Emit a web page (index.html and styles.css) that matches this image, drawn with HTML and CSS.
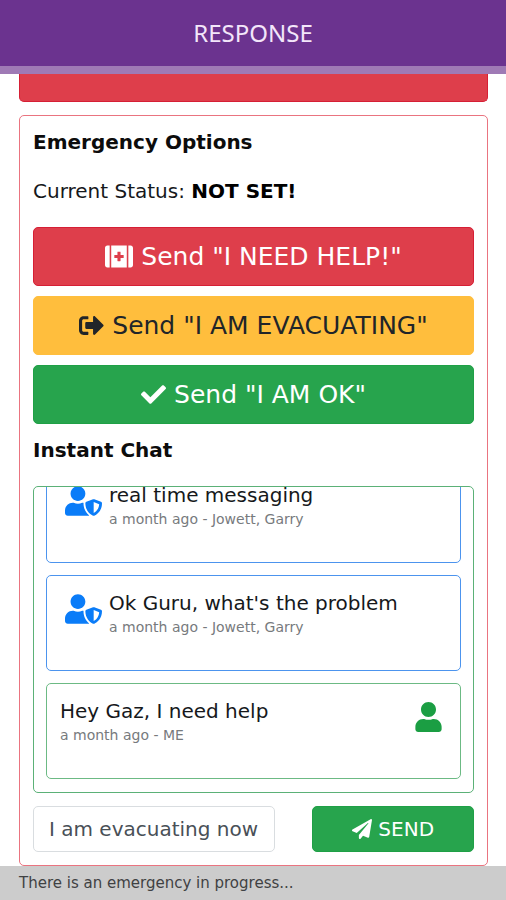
FILE: index.html
```html
<!DOCTYPE html>
<html lang="en">
<head>
<meta charset="utf-8">
<meta name="viewport" content="width=device-width, initial-scale=1">
<title>Response</title>
<link rel="stylesheet" href="styles.css">
</head>
<body>
<svg class="sprite" aria-hidden="true">
  <symbol id="user-shield" viewBox="0 0 640 512"><path d="M622.3 271.1l-115.2-45c-4.1-1.6-12.6-3.7-22.2 0l-115.2 45c-10.7 4.2-17.7 14-17.7 24.9 0 111.6 68.7 188.8 132.9 213.9 9.6 3.7 18 1.6 22.2 0C558.4 489.9 640 420.5 640 296c0-10.9-7-20.7-17.7-24.9zM496 462.4V273.3l95.5 37.3c-5.6 87.1-60.9 135.4-95.5 151.8zM224 256c70.7 0 128-57.3 128-128S294.7 0 224 0 96 57.3 96 128s57.3 128 128 128zm96 40c0-2.5.8-4.8 1.1-7.2-2.5-.1-4.9-.8-7.5-.8h-16.7c-22.2 10.2-46.9 16-72.9 16s-50.6-5.8-72.9-16h-16.7C60.2 288 0 348.2 0 422.4V464c0 26.5 21.5 48 48 48h352c6.8 0 13.3-1.5 19.2-4-54-42.9-99.2-116.7-99.2-212z"/></symbol>
</svg>
<header class="topbar"><h1 class="topbar-title">RESPONSE</h1></header>
<main class="page">
  <div class="alert"></div>
  <section class="card">
    <h2 class="heading">Emergency Options</h2>
    <p class="status">Current Status: <strong>NOT SET!</strong></p>
    <div class="actions">
      <button type="button" class="btn danger"><svg class="icon wide" viewBox="0 0 576 512" aria-hidden="true"><path d="M0 80v352c0 26.500 21.500 48 48 48h48V32H48C21.500 32 0 53.500 0 80zm128 400h320V32H128v448zm64-248c0-4.400 3.600-8 8-8h56v-56c0-4.400 3.600-8 8-8h48c4.400 0 8 3.600 8 8v56h56c4.400 0 8 3.600 8 8v48c0 4.400-3.600 8-8 8h-56v56c0 4.400-3.600 8-8 8h-48c-4.400 0-8-3.600-8-8v-56h-56c-4.400 0-8-3.600-8-8v-48zM528 32h-48v448h48c26.500 0 48-21.500 48-48V80c0-26.500-21.500-48-48-48z"/></svg><span>Send "I NEED HELP!"</span></button>
      <button type="button" class="btn warning"><svg class="icon" viewBox="0 0 512 512" aria-hidden="true"><path d="M497 273L329 441c-15 15-41 4.500-41-17v-96H152c-13.300 0-24-10.700-24-24v-96c0-13.300 10.700-24 24-24h136V88c0-21.400 25.900-32 41-17l168 168c9.300 9.400 9.300 24.600 0 34zM192 436v-40c0-6.600-5.400-12-12-12H96c-17.700 0-32-14.300-32-32V160c0-17.700 14.300-32 32-32h84c6.600 0 12-5.400 12-12V76c0-6.600-5.400-12-12-12H96c-53 0-96 43-96 96v192c0 53 43 96 96 96h84c6.600 0 12-5.400 12-12z"/></svg><span>Send "I AM EVACUATING"</span></button>
      <button type="button" class="btn success"><svg class="icon" viewBox="0 0 512 512" aria-hidden="true"><path d="M173.898 439.404l-166.400-166.400c-9.997-9.997-9.997-26.206 0-36.204l36.203-36.204c9.997-9.998 26.207-9.998 36.204 0L192 312.690 432.095 72.596c9.997-9.997 26.207-9.997 36.204 0l36.203 36.204c9.997 9.997 9.997 26.206 0 36.204l-294.400 294.401c-9.998 9.997-26.207 9.997-36.204-.001z"/></svg><span>Send "I AM OK"</span></button>
    </div>
    <h2 class="heading">Instant Chat</h2>
    <div class="chat">
      <article class="message">
        <svg class="avatar shield" aria-hidden="true"><use href="#user-shield"/></svg>
        <div class="message-body"><p class="message-text">real time messaging</p><p class="message-meta">a month ago - Jowett, Garry</p></div>
      </article>
      <article class="message">
        <svg class="avatar shield" aria-hidden="true"><use href="#user-shield"/></svg>
        <div class="message-body"><p class="message-text">Ok Guru, what's the problem</p><p class="message-meta">a month ago - Jowett, Garry</p></div>
      </article>
      <article class="message mine">
        <div class="message-body"><p class="message-text">Hey Gaz, I need help</p><p class="message-meta">a month ago - ME</p></div>
        <svg class="avatar" viewBox="0 0 448 512" aria-hidden="true"><path d="M224 256c70.700 0 128-57.300 128-128S294.700 0 224 0 96 57.300 96 128s57.300 128 128 128zm89.600 32h-16.700c-22.200 10.200-46.900 16-72.900 16s-50.600-5.800-72.900-16h-16.700C60.200 288 0 348.200 0 422.400V464c0 26.500 21.500 48 48 48h352c26.500 0 48-21.500 48-48v-41.600c0-74.200-60.200-134.400-134.400-134.400z"/></svg>
      </article>
    </div>
    <form class="composer">
      <input class="composer-input" type="text" aria-label="Message" value="I am evacuating now">
      <button type="button" class="btn success send"><svg class="icon" viewBox="0 0 512 512" aria-hidden="true"><path d="M476 3.200L12.500 270.600c-18.100 10.400-15.800 35.600 2.200 43.200L121 358.400l287.300-253.200c5.500-4.900 13.300 2.600 8.600 8.300L176 407v80.500c0 23.600 28.500 32.900 42.500 15.800L282 426l124.600 52.200c14.200 6 30.400-2.900 33-18.200l72-432C515 7.800 493.300-6.800 476 3.200z"/></svg><span>SEND</span></button>
    </form>
  </section>
</main>
<footer class="notice">There is an emergency in progress...</footer>
</body>
</html>
```
FILE: styles.css
```css
* { box-sizing: border-box; }

body {
  margin: 0;
  height: 100vh;
  display: flex;
  flex-direction: column;
  background: #fff;
  color: #16181b;
  font-family: Verdana, "DejaVu Sans", sans-serif;
  font-size: 20px;
}

h1, h2, p { margin: 0; }
svg { fill: currentColor; flex: none; }
.sprite { position: absolute; width: 0; height: 0; }

.topbar {
  flex: none;
  padding: 20px;
  border-bottom: 8px solid #9f7ab5;
  background: #6b338f;
  color: #f3e6fa;
  text-align: center;
}
.topbar-title { font-family: "Noto Sans", sans-serif; font-size: 24px; font-weight: 400; line-height: 26px; }

.page {
  flex: 1;
  min-height: 0;
  display: flex;
  flex-direction: column;
  padding: 0 18px 0 19px;
}

.alert {
  flex: none;
  height: 28px;
  margin-bottom: 13px;
  border: 1px solid #d61f35;
  border-top: 0;
  border-radius: 0 0 5px 5px;
  background: #de3e4b;
}

.card {
  flex: 1;
  min-height: 0;
  display: flex;
  flex-direction: column;
  padding: 12px 13px 13px;
  border: 1px solid #ea7480;
  border-radius: 5px;
}

.heading { font-size: 20px; font-weight: 700; line-height: 28px; color: #0c0c0c; }
.status { margin: 22px 0 23px; line-height: 26px; }
.status strong { color: #000; }

.actions { display: grid; gap: 10px; margin-bottom: 12px; }

.btn {
  display: flex;
  align-items: center;
  justify-content: center;
  gap: 8px;
  padding: 0 12px;
  height: 59px;
  border: 1px solid;
  border-radius: 5px;
  font: 400 25px/32px Verdana, "DejaVu Sans", sans-serif;
}
.icon { width: 25px; height: 25px; }
.icon.wide { width: 28px; }
.danger { background: #de3e4b; border-color: #d61f35; color: #fff; }
.warning { background: #ffbe3d; border-color: #ffbe3d; color: #212529; }
.success { background: #27a44d; border-color: #1fa046; color: #fff; }

.chat {
  flex: 1;
  min-height: 0;
  display: flex;
  flex-direction: column;
  justify-content: flex-end;
  gap: 12px;
  margin: 22px 0 13px;
  padding: 12px 12px 13px;
  overflow: hidden;
  border: 1px solid #5bb177;
  border-radius: 5px;
}

.message {
  flex: none;
  display: flex;
  gap: 7px;
  height: 96px;
  padding: 14px 18px;
  border: 1px solid #4c94ee;
  border-radius: 5px;
}
.mine { justify-content: space-between; padding-left: 13px; border-color: #6cba84; }
.avatar { width: 27px; height: 30px; margin-top: 4px; color: #1b9e43; }
.avatar.shield { width: 37px; color: #0a7cf8; }
.message-text { line-height: 26px; }
.message-meta { font-size: 14px; line-height: 22px; color: #777a7d; }

.composer { display: grid; grid-template-columns: 3fr 2fr; gap: 37px; }
.composer-input {
  min-width: 0;
  height: 46px;
  padding: 0 12px 0 15px;
  border: 1px solid #d9dde0;
  border-radius: 5px;
  background: #fff;
  color: #495057;
  font: 400 20px/28px Verdana, "DejaVu Sans", sans-serif;
}
.send { height: 46px; font-size: 20px; line-height: 28px; gap: 6px; }
.send .icon { width: 20px; height: 20px; }

.notice {
  flex: none;
  height: 34px;
  padding: 0 19px;
  background: #ccc;
  color: #3f4143;
  font-size: 15px;
  line-height: 34px;
}
```
